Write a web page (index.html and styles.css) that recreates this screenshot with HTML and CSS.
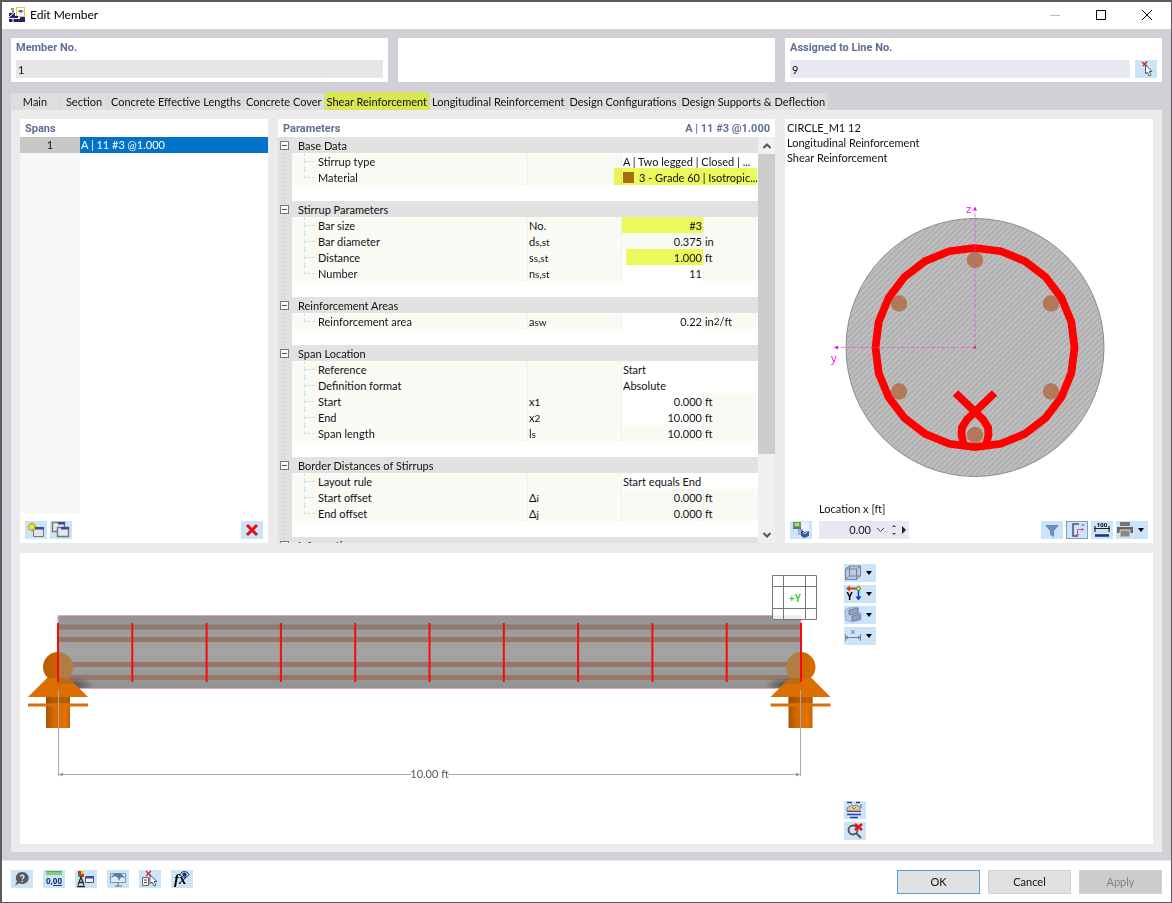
FILE: index.html
```html
<!DOCTYPE html>
<html lang="en">
<head>
<meta charset="utf-8">
<title>Edit Member</title>
<link rel="stylesheet" href="styles.css">
</head>
<body>
<div class="window">
  <header class="titlebar">
    <svg class="app-icon" viewBox="0 0 16 16" aria-hidden="true">
      <rect x="7.500" y=".5" width="8" height="9" fill="#fff" stroke="#f0c040"/><path d="M9 5c1-3 4-3 6 0l-2-.5-1 2.500-1-2z" fill="#3d6fa8"/>
      <path d="M2 1h3v2H2zM3 3h2v3H3z" fill="#b09a4a"/><path d="M0 6h6v5H0zM0 12h16v3H0z" fill="#20236b"/><path d="M6 9h3v2H6zM11 10h5v2h-5z" fill="#20236b"/><path d="M0 10l5-4M4 12v3" stroke="#fff"/>
    </svg>
    <h1 class="title">Edit Member</h1>
    <div class="window-controls">
      <button class="win-btn" aria-label="Minimize"><svg viewBox="0 0 12 12"><path d="M1 6.500h10" stroke="#bbb"/></svg></button>
      <button class="win-btn" aria-label="Maximize"><svg viewBox="0 0 12 12"><path d="M1.500 1.500h9v9h-9z" fill="none" stroke="#000"/></svg></button>
      <button class="win-btn" aria-label="Close"><svg viewBox="0 0 12 12"><path d="M1 1l10 10M11 1L1 11" stroke="#000"/></svg></button>
    </div>
  </header>

  <main class="content">
    <div class="header-cards">
      <section class="card">
        <label class="heading" for="member">Member No.</label>
        <input class="field readonly" id="member" value="1" readonly>
      </section>
      <section class="card"></section>
      <section class="card">
        <label class="heading" for="line">Assigned to Line No.</label>
        <div class="field-row">
          <input class="field" id="line" value="9">
          <button class="tool" aria-label="Select line"><svg viewBox="0 0 22 18"><path d="M7 2l5 4M12 1.500L8 6" stroke="#e02020" stroke-width="1.500"/><path d="M10.500 5v9l2-2 1.500 4 2-1-1.700-3.500H17z" fill="#fff" stroke="#556"/></svg></button>
        </div>
      </section>
    </div>

    <nav class="tabs">
      <button class="tab short">Main</button><button class="tab short">Section</button><button class="tab">Concrete Effective Lengths</button><button class="tab">Concrete Cover</button><button class="tab active">Shear Reinforcement</button><button class="tab">Longitudinal Reinforcement</button><button class="tab">Design Configurations</button><button class="tab">Design Supports &amp; Deflection</button>
    </nav>

    <div class="tab-page">
      <div class="upper">
        <section class="panel spans">
          <h2 class="heading">Spans</h2>
          <div class="span-list">
            <table class="span-table"><tbody><tr><th scope="row">1</th><td>A | 11 #3 @1.000</td></tr></tbody></table>
            <div class="span-rest"></div>
          </div>
          <div class="span-tools">
            <button class="tool" aria-label="New span"><svg viewBox="0 0 22 18"><path d="M8.500 6.500h10v9h-10z" fill="#e4e4e4" stroke="#777"/><path d="M9 6h10v2.500H9z" fill="#3948a8"/><path d="M7 1l.8 3L10 2.500 9.200 5 12 5.500 9.500 6.500l1 2.500-2.700-1L7 10.500 6 8 3.500 9l1-2.500L2 5.500 4.800 5 4 2.500 6.200 4z" fill="#f2ec20" stroke="#8b9a28" stroke-width=".6"/></svg></button>
            <button class="tool" aria-label="Copy span"><svg viewBox="0 0 22 18"><path d="M2.500 1.500h12v9h-12z" fill="#e8e8e8" stroke="#777" stroke-width="1.400"/><path d="M8 1h7v2.500H8z" fill="#3948a8"/><path d="M7.500 6.500h11v9h-11z" fill="#e8e8e8" stroke="#777" stroke-width="1.400"/><path d="M11 6h8v2.500h-8z" fill="#3948a8"/></svg></button>
            <button class="tool push" aria-label="Delete span"><svg viewBox="0 0 22 18"><path d="M6 4l10 10M16 4L6 14" stroke="#ee0d0d" stroke-width="3"/></svg></button>
          </div>
        </section>

        <section class="panel params">
          <div class="params-head"><h2 class="heading">Parameters</h2><span class="heading">A | 11 #3 @1.000</span></div>
          <div class="params-body">
            <div class="grid-scroll">
            <table class="grid">
              <colgroup><col class="c-gutter"><col class="c-label"><col class="c-symbol"><col class="c-value"><col class="c-unit"></colgroup>
              <tbody>
              <tr class="group"><td><button class="toggle" aria-label="Collapse Base Data"></button></td><th colspan="4">Base Data</th></tr>
              <tr><td></td><th>Stirrup type</th><td></td><td colspan="2" class="edit">A | Two legged | Closed | ...</td></tr>
              <tr class="last"><td></td><th>Material</th><td></td><td colspan="2" class="edit wide"><span class="swatch"></span>3 - Grade 60 | Isotropic...</td></tr>
              <tr class="gap"><td></td><td colspan="4"></td></tr>
              <tr class="group"><td><button class="toggle" aria-label="Collapse Stirrup Parameters"></button></td><th colspan="4">Stirrup Parameters</th></tr>
              <tr><td></td><th>Bar size</th><td>No.</td><td class="num mark">#3</td><td></td></tr>
              <tr><td></td><th>Bar diameter</th><td>d<small>s,st</small></td><td class="num">0.375</td><td>in</td></tr>
              <tr><td></td><th>Distance</th><td>s<small>s,st</small></td><td class="num edit narrow">1.000</td><td>ft</td></tr>
              <tr class="last"><td></td><th>Number</th><td>n<small>s,st</small></td><td class="num edit">11</td><td></td></tr>
              <tr class="gap"><td></td><td colspan="4"></td></tr>
              <tr class="group"><td><button class="toggle" aria-label="Collapse Reinforcement Areas"></button></td><th colspan="4">Reinforcement Areas</th></tr>
              <tr class="last"><td></td><th>Reinforcement area</th><td>a<small>sw</small></td><td class="num edit">0.22</td><td>in<small class="up">2</small>/ft</td></tr>
              <tr class="gap"><td></td><td colspan="4"></td></tr>
              <tr class="group"><td><button class="toggle" aria-label="Collapse Span Location"></button></td><th colspan="4">Span Location</th></tr>
              <tr><td></td><th>Reference</th><td></td><td colspan="2" class="edit">Start</td></tr>
              <tr><td></td><th>Definition format</th><td></td><td colspan="2" class="edit">Absolute</td></tr>
              <tr><td></td><th>Start</th><td>x<small>1</small></td><td class="num edit">0.000</td><td>ft</td></tr>
              <tr><td></td><th>End</th><td>x<small>2</small></td><td class="num edit">10.000</td><td>ft</td></tr>
              <tr class="last"><td></td><th>Span length</th><td>l<small>s</small></td><td class="num">10.000</td><td>ft</td></tr>
              <tr class="gap"><td></td><td colspan="4"></td></tr>
              <tr class="group"><td><button class="toggle" aria-label="Collapse Border Distances of Stirrups"></button></td><th colspan="4">Border Distances of Stirrups</th></tr>
              <tr><td></td><th>Layout rule</th><td></td><td colspan="2" class="edit">Start equals End</td></tr>
              <tr><td></td><th>Start offset</th><td>Δ<small>i</small></td><td class="num">0.000</td><td>ft</td></tr>
              <tr class="last"><td></td><th>End offset</th><td>Δ<small>j</small></td><td class="num">0.000</td><td>ft</td></tr>
              <tr class="gap"><td></td><td colspan="4"></td></tr>
              <tr class="group"><td><button class="toggle" aria-label="Collapse Information"></button></td><th colspan="4">Information</th></tr>
              </tbody>
            </table>
            </div>
            <div class="scrollbar">
              <button class="scroll-btn" aria-label="Scroll up"><svg viewBox="0 0 10 8"><path d="M1.500 6L5 2.500 8.500 6" fill="none" stroke="#555" stroke-width="2"/></svg></button>
              <div class="thumb"></div><div class="track"></div>
              <button class="scroll-btn" aria-label="Scroll down"><svg viewBox="0 0 10 8"><path d="M1.500 2L5 5.500 8.500 2" fill="none" stroke="#555" stroke-width="2"/></svg></button>
            </div>
          </div>
        </section>

        <section class="panel section-view">
          <p class="section-text">CIRCLE_M1 12<br>Longitudinal Reinforcement<br>Shear Reinforcement</p>
          <svg class="section-svg" viewBox="-190 -181 368 332" role="img" aria-label="Circular cross-section">
            <defs><pattern id="hatch" width="4" height="4" patternUnits="userSpaceOnUse" patternTransform="rotate(45)"><rect width="4" height="4" fill="#b0b0b0"/><path d="M1 0v4" stroke="#cfcfcf" stroke-width="1"/></pattern></defs>
            <circle r="129" fill="url(#hatch)" stroke="#8c8c8c"/>
            <g fill="#b37859"><circle cy="-87.500" r="8.200"/><circle cx="-76" cy="-44" r="8.200"/><circle cx="76" cy="-44" r="8.200"/><circle cx="-76" cy="44" r="8.200"/><circle cx="76" cy="44" r="8.200"/><circle cy="87.500" r="8.200"/></g>
            <g fill="none" stroke="#f00" stroke-width="7.800">
              <path d="M0-99.500L25.800-96.300 49.900-86.300 70.500-70.500 86.300-49.900 96.300-25.800 99.500 0 96.300 25.800 86.300 49.900 70.500 70.500 49.900 86.300 25.800 96.300 0 99.500-25.800 96.300-49.900 86.300-70.500 70.500-86.300 49.900-96.300 25.800-99.500 0-96.300-25.800-86.300-49.900-70.500-70.500-49.900-86.300-25.800-96.300z"/>
              <path d="M-19.500 45.500L8 72l5 8 .5 7-2 9M19.500 45.500L-8 72l-5 8-.5 7 2 9"/>
            </g>
            <path d="M0 0V-137M0 0H-137" stroke="#e040e0" stroke-dasharray="4 2 2 2" stroke-width=".7"/>
            <path d="M-2-137L0-141 2-137zM-137-2L-141 0-137 2z" fill="#f0f"/><circle r="1.200" fill="#e02050"/>
            <text class="axis" x="-9" y="-135">z</text><text class="axis" x="-144" y="14">y</text>
          </svg>
          <div class="location">
            <label class="location-label" for="loc">Location x [ft]</label>
            <div class="location-row">
              <button class="tool" aria-label="Render"><svg viewBox="0 0 22 18"><path d="M9 1h10v15H9z" fill="#fff" opacity=".6"/><path d="M3 1h8v7H3z" fill="#5ea552"/><path d="M5 2h4v3H5z" fill="#e2cf54"/><path d="M3 6h8v2H3z" fill="#4d7aa8"/><path d="M8 8h5v6H8z" fill="#8698ad" opacity=".7"/><path d="M11 9l4 2 4-1v5l-5 2-3-2z" fill="#355f96"/><path d="M13 11l2 2 2-2" fill="none" stroke="#cde"/></svg></button>
              <div class="spin">
                <input id="loc" class="spin-input" value="0.00">
                <svg class="spin-marks" viewBox="0 0 34 18" aria-hidden="true"><path d="M2 7l3.500 3.500L9 7" fill="none" stroke="#444"/><path d="M17 6L19 4l2 2zM17 12l2 2 2-2z" fill="#444"/><path d="M27 5l4 4-4 4z" fill="#222"/></svg>
              </div>
              <button class="tool push" aria-label="Filter"><svg viewBox="0 0 22 18"><path d="M4 4h14l-5 6v6l-4-2v-4z" fill="#6d8fc0"/></svg></button>
              <button class="tool pressed" aria-label="Axes"><svg viewBox="0 0 22 18"><path d="M13 3H7v12h5" fill="none" stroke="#4b4f66" stroke-width="1.500"/><path d="M11.500 15V8.500h6M10 13l1.500 2 1.500-2M15.500 7l2 1.500-2 1.500M16 3l1 2 1-2" fill="none" stroke="#e0508e"/></svg></button>
              <button class="tool" aria-label="Dimensions"><svg viewBox="0 0 22 18"><text x="11" y="6" class="icon-100">100</text><path d="M3 7.500h16M4 5v6M18 5v6" stroke="#222" stroke-width="1.200"/><path d="M4 14.500h14" stroke="#1d2f7d" stroke-width="2.500"/></svg></button>
              <button class="tool wide" aria-label="Print"><svg viewBox="0 0 32 18"><path d="M4 1h10v4H4z" fill="#777"/><path d="M1 6h16v6H1z" fill="#666"/><path d="M4 9h10v7H4z" fill="#888" stroke="#ddd"/><path d="M22 7h6l-3 4z" fill="#000"/></svg></button>
            </div>
          </div>
        </section>
      </div>

      <section class="panel model">
        <svg class="beam" viewBox="20 553 824 291" role="img" aria-label="Member on two supports">
          <defs>
            <linearGradient id="conc" x1="0" y1="0" x2="0" y2="1"><stop offset="0" stop-color="#949494"/><stop offset=".5" stop-color="#a4a4a4"/><stop offset="1" stop-color="#929292"/></linearGradient>
            <linearGradient id="pier"><stop offset="0" stop-color="#a85400"/><stop offset=".35" stop-color="#d56900"/><stop offset=".8" stop-color="#e57200"/><stop offset="1" stop-color="#c66200"/></linearGradient>
            <linearGradient id="ball"><stop offset="0" stop-color="#b95d00"/><stop offset="1" stop-color="#d96c00"/></linearGradient>
            <radialGradient id="shade"><stop offset="0" stop-color="#333" stop-opacity=".8"/><stop offset="1" stop-color="#333" stop-opacity="0"/></radialGradient>
            <clipPath id="inside"><path d="M58 615h743v73H58z"/></clipPath>
            <g id="base"><path d="M-12 30h24v31h-24z" fill="url(#pier)"/><path d="M-12 30h24v6h-24z" fill="#8a4600" opacity=".45"/><path d="M-11 11l-19 19h60l-19-19z" fill="#dc6f00"/><path d="M-30 38h60" stroke="#dd7000" stroke-width="3"/></g>
          </defs>
          <circle cx="58" cy="667" r="15" fill="url(#ball)"/><circle cx="800.500" cy="667" r="15" fill="url(#ball)"/>
          <path d="M58 615.500h743v73H58z" fill="url(#conc)" stroke="#e5a9a9"/>
          <g fill="none"><path d="M58 627h743" stroke="#8b7b70" stroke-width="5"/><path d="M58 639.500h743M58 664.500h743M58 677.500h743" stroke="#98776a" stroke-width="5"/></g>
          <path d="M58 652a15 15 0 0 1 0 30zM801 652a15 15 0 0 0 0 30z" fill="#b27d43"/>
          <g clip-path="url(#inside)" fill="url(#shade)"><ellipse cx="72" cy="685" rx="22" ry="8"/><ellipse cx="787" cy="685" rx="22" ry="8"/></g>
          <use href="#base" x="58" y="667"/><use href="#base" x="800.500" y="667"/>
          <path d="M58 678h11l6 6H58zM801 678h-11l-6 6h17z" fill="#a46529" opacity=".6"/>
          <path d="M58 623v59M132.300 623v59M206.600 623v59M280.900 623v59M355.200 623v59M429.500 623v59M503.800 623v59M578.100 623v59M652.400 623v59M726.700 623v59M801 623v59" stroke="#f80a0a" stroke-width="2"/>
          <path d="M58.500 690v86M800.500 690v86M59 774.500h352M448 774.500h352" stroke="#aaa" fill="none"/>
          <path d="M59 774.500l4-2v4zM800 774.500l-4-2v4z" fill="#999"/>
          <text class="dim" x="429.500" y="778">10.00 ft</text>
          <path d="M772 575h45v45h-45z" fill="#fff" fill-opacity=".82"/>
          <path d="M772.500 575.500h44v44h-44zM783.500 575v45M805.500 575v45M772 586.500h45M772 608.500h45" fill="none" stroke="#777"/>
          <text class="plus-y" x="795" y="602">+Y</text>
        </svg>
        <div class="model-tools">
          <button class="tool wide" aria-label="View box"><svg viewBox="0 0 32 18"><path d="M1.500 5l4-3h11v10l-4 3.500h-11z" fill="#b9c9e2" stroke="#71829c"/><path d="M1.500 5h11v10.500M12.500 5l4-3M5.500 2v10h11M5.500 12l-4 3" fill="none" stroke="#71829c"/><path d="M22 7h6l-3 4z" fill="#000"/></svg></button>
          <button class="tool wide" aria-label="View direction"><svg viewBox="0 0 32 18"><path d="M6 3.500h7" stroke="#d43b12" stroke-width="2"/><path d="M2 3.500l4-3v6z" fill="#d43b12"/><path d="M14.500 5v8" stroke="#1337c8" stroke-width="1.500"/><path d="M11.500 11.500h6l-3 4z" fill="#1337c8"/><circle cx="14.500" cy="3.500" r="2" fill="#dde33b" stroke="#2d9346"/><text x="5.500" y="15" class="icon-y">Y</text><path d="M22 7h6l-3 4z" fill="#000"/></svg></button>
          <button class="tool wide" aria-label="Display mode"><svg viewBox="0 0 32 18"><path d="M1 4l4-2 9-1v5l3 1v7l-9 2-6-2z" fill="#bccde6" stroke="#8fa3c2" stroke-width=".8"/><path d="M5 4l9-2v5l-9 2zM8 10l8-2v5l-8 2z" fill="#8da2c5" stroke="#5f769b" stroke-width=".8"/><path d="M22 7h6l-3 4z" fill="#000"/></svg></button>
          <button class="tool wide" aria-label="Show dimensions"><svg viewBox="0 0 32 18"><path d="M1.500 7v7M16.500 7v7M2 10.500h14M4 9l-2 1.500L4 12M14 9l2 1.500-2 1.500" fill="none" stroke="#71829c"/><path d="M7 3l4 4M11 3L7 7" stroke="#71829c"/><path d="M22 7h6l-3 4z" fill="#000"/></svg></button>
          <button class="tool drop" aria-label="Layers"><svg viewBox="0 0 22 18"><path d="M3 1.500h5M12 1.500h4M3 13.500h14M6 16.500h8" stroke="#2a3ea8" stroke-width="1.600"/><path d="M3 7l5-3 2 1 2-1 4 2v4H3z" fill="#dfc5a4" stroke="#8a7a6c"/><path d="M8 6l2 2 2-2" fill="none" stroke="#8a7a6c"/><path d="M3 10.500h14" stroke="#555"/><path d="M16 3h2v4h-2z" fill="#78a8e0"/></svg></button>
          <button class="tool" aria-label="Reset zoom"><svg viewBox="0 0 22 18"><circle cx="9" cy="8" r="4.500" fill="none" stroke="#555" stroke-width="1.800"/><path d="M12 11l5 5" stroke="#555" stroke-width="2"/><path d="M11 2l7 6M18 2l-7 6" stroke="#e81111" stroke-width="2.400"/></svg></button>
        </div>
      </section>
    </div>
  </main>

  <footer class="footer">
    <div class="footer-tools">
      <button class="tool" aria-label="Help"><svg viewBox="0 0 22 18"><path d="M11 2a6.500 6 0 1 1-3 11.200L4 15.500l2-4A6 6 0 0 1 11 2z" fill="#5a5a5a"/><path d="M9.300 6.500c.5-2 4-1.500 3.500.5-.3 1-1.500 1.200-1.600 2.500M11.200 10.800v1.400" fill="none" stroke="#d7e8f5" stroke-width="1.400"/></svg></button>
      <button class="tool" aria-label="Units"><svg viewBox="0 0 22 18"><path d="M3 1h16v4H3z" fill="#7ed07a"/><path d="M3 1.500h16" stroke="#4caa50"/><text x="11" y="14" class="icon-zero">0,00</text><path d="M10 15.500h9" stroke="#23379a"/></svg></button>
      <button class="tool" aria-label="Display properties"><svg viewBox="0 0 22 18"><path d="M3 1h3v3H3z" fill="#e22"/><path d="M6 1h3v3H6z" fill="#dbd420"/><path d="M3 4h3v3H3z" fill="#2a9f36"/><path d="M6 4h3v3H6z" fill="#e22"/><path d="M3 15l3-8 3 8M4 12.500h4M2 16.500h8" fill="none" stroke="#222" stroke-width="1.300"/><path d="M10.500 6.500h8v6h-8z" fill="#f5f5f5" stroke="#555"/><path d="M11 6h8v2.500h-8z" fill="#3948a8"/></svg></button>
      <button class="tool" aria-label="Show model"><svg viewBox="0 0 22 18"><path d="M3.500 3.500h15v9h-15z" fill="#dceaf5" stroke="#8294a5"/><path d="M8 16h7M11 13v3" stroke="#8294a5" stroke-width="1.500"/><path d="M4 8c2-6 10-7 14 0l-4-1-2 4-1-3-3-2z" fill="#507eaa"/></svg></button>
      <button class="tool" aria-label="Select object"><svg viewBox="0 0 22 18"><path d="M3.500 7.500h6v8h-6z" fill="#f5f5f5" stroke="#666"/><path d="M5 10h3M5 12.500h3" stroke="#555"/><path d="M7 1l5 5M12 1L7 6" stroke="#e02020" stroke-width="1.300"/><path d="M11 5v9l2-2 2 4 2-1-2-3.500h3z" fill="#fff" stroke="#556"/></svg></button>
      <button class="tool" aria-label="Formula"><svg viewBox="0 0 22 18"><text x="3" y="14" class="icon-f">fx</text><path d="M9 4.500c2-4 7-4 9 0-2 3.500-7 3.500-9 0z" fill="#c9d4ee" stroke="#1e2a78"/><circle cx="13.500" cy="4.500" r="2" fill="#1e2a78"/></svg></button>
    </div>
    <div class="actions">
      <button class="action primary">OK</button><button class="action">Cancel</button><button class="action" disabled>Apply</button>
    </div>
  </footer>
</div>
</body>
</html>
```
FILE: styles.css
```css
* { box-sizing: border-box; }
body {
  margin: 0; height: 100vh; padding: 2px 1px 1px 2px; background: #5c5a5a;
  font: 11px/16px Lato, "Open Sans", sans-serif; color: #111;
}
button, input { font: inherit; color: inherit; border: 0; border-radius: 0; padding: 0; margin: 0; background: none; }
h1, h2, p { margin: 0; font: inherit; }
svg { display: block; }

.window { display: flex; flex-direction: column; height: 100%; background: #fff; }
.titlebar { display: flex; align-items: center; height: 27px; padding: 0 1px 1px 7px; flex: none; }
.app-icon { width: 16px; height: 16px; }
.title { flex: 1; margin-left: 5px; font-size: 12px; color: #000; }
.window-controls { display: flex; }
.win-btn { width: 46px; height: 26px; display: grid; place-items: center; }
.win-btn svg { width: 12px; height: 12px; }

.content { flex: 1; min-height: 0; display: flex; flex-direction: column; padding: 9px 9px 8px; background: #d1d0d6; border-bottom: 1px solid #e8e8ec; }
.header-cards { display: grid; grid-template-columns: repeat(3, 1fr); gap: 10px; flex: none; }
.card { display: flex; flex-direction: column; gap: 4px; min-height: 44px; padding: 0 5px; background: #fff; }
.heading { padding-top: 1px; font: 700 11px/17px Roboto, sans-serif; color: #5f6f96; }
.field { width: 100%; height: 18px; padding: 1px 2px 0; background: #e8e8f3; }
.field.readonly { background: #e6e6e6; }
.field-row { display: flex; gap: 5px; }
.field-row .field { flex: 1; min-width: 0; }

.tool { flex: none; width: 22px; height: 18px; background: #cce4f7; }
.tool svg { width: 100%; height: 100%; }
.tool.wide { width: 32px; }
.tool.push { margin-left: auto; }
.tool.pressed { outline: 1px solid #7ba0c4; outline-offset: -1px; }

.tabs { display: flex; align-items: flex-end; flex: none; height: 18px; margin-top: 10px; }
.tab { height: 17px; padding: 1px 2px 0; background: #dedede; border-right: 1px solid #d6d6d9; white-space: nowrap; line-height: 16px; }
.tab.short { min-width: 49px; }
.tab.active { height: 18px; background: #d9e653; }

.tab-page { flex: 1; min-height: 0; display: grid; grid-template-rows: 424fr 291fr; gap: 10px; padding: 9px 9px 8px; background: #ebebeb; }
.upper { display: grid; grid-template-columns: 248fr 497fr 368fr; gap: 10px; min-height: 0; }
.panel { background: #fff; min-width: 0; min-height: 0; }

.spans { display: flex; flex-direction: column; }
.spans .heading { padding-left: 5px; }
.span-list { flex: 1; display: flex; flex-direction: column; }
.span-table { width: 100%; border-collapse: collapse; table-layout: fixed; line-height: 16px; }
.span-table th { width: 60px; padding: 0; background: #c8c8c8; font-weight: 400; }
.span-table td { padding: 0 1px; background: #0173cb; color: #fff; }
.span-rest { flex: 1; width: 60px; background: #f7f7f7; }
.span-tools { display: flex; gap: 3px; padding: 8px 5px 4px; }

.params { display: flex; flex-direction: column; }
.params-head { display: flex; justify-content: space-between; padding: 0 5px; flex: none; }
.params-body { flex: 1; min-height: 0; display: flex; }
.grid-scroll { flex: 1; overflow: hidden; }
.grid { width: 100%; border-collapse: separate; border-spacing: 0; table-layout: fixed; line-height: 15px; white-space: nowrap; }
.c-gutter { width: 14px; }
.c-symbol { width: 94px; }
.c-value { width: 82px; }
.c-unit { width: 55px; }
.grid td, .grid th { height: 16px; padding: 1px 1px 0; font-weight: 400; text-align: left; background: #fafaf5; position: relative; }
.grid tr > td:first-child { padding: 0; background: repeating-linear-gradient(#ccc 0 2px, transparent 2px 4px) 6px 0 / 1px 100% no-repeat #e1e1e1; }
.grid th { padding-left: 26px; }
.grid tr:not(.group) th::before { content: ""; position: absolute; left: 12px; top: 0; width: 10px; height: 8px; border: dashed #ddd; border-width: 0 0 1px 1px; }
.grid tr:not(.group):not(.last) th::after { content: ""; position: absolute; left: 12px; top: 8px; height: 8px; border-left: 1px dashed #ddd; }
.grid .group th { padding-left: 6px; background: #e2e2e2; }
.grid .gap td:last-child { background: #fff; }
.grid td + td, .grid th + td { border-left: 1px solid #f0f0ec; }
.grid .gap td { border: 0; }
.grid td.edit { background: #fff; }
.grid td.num { text-align: right; }
.grid td.mark { background: #ebf95c; }
.grid td.narrow { background: linear-gradient(#ebf95c, #ebf95c) 4px 0 no-repeat #fff; }
.grid td.wide::before { content: ""; position: absolute; inset: -1px 1px -2px -8px; background: #ebf95c; mix-blend-mode: multiply; }
.grid small { font-size: 10px; line-height: 0; }
.grid small.up { vertical-align: 1px; }
.swatch { display: inline-block; width: 11px; height: 11px; margin-right: 5px; vertical-align: -1px; background: #b8702f; }
.toggle { display: block; width: 9px; height: 9px; margin-left: 2px; border: 1px solid #777; background: linear-gradient(#555, #555) center / 5px 1px no-repeat #fff; }

.scrollbar { display: flex; flex-direction: column; width: 17px; background: #f0f0f0; }
.scroll-btn { height: 17px; display: grid; place-items: center; }
.scroll-btn svg { width: 10px; height: 8px; }
.thumb { flex: 300; background: #cdcdcd; }
.track { flex: 72; }

.section-view { display: flex; flex-direction: column; }
.section-text { padding: 1px 2px 0; line-height: 15px; }
.section-svg { flex: 1; width: 100%; min-height: 0; }
.axis { font: 11px "Open Sans", sans-serif; fill: #f0f; }
.location { padding: 0 5px 4px; }
.location-label { display: block; margin: 0 0 3px 29px; line-height: 18px; }
.location-row { display: flex; gap: 3px; }
.spin { display: flex; width: 90px; margin-left: 4px; background: #e8e8f3; }
.spin-input { flex: 1; min-width: 0; text-align: right; }
.spin-marks { width: 34px; height: 18px; margin-left: 4px; }

.model { display: grid; grid-template-columns: 824fr 309fr; }
.beam { width: 100%; height: 100%; min-height: 0; }
.dim { font: 11px Lato, sans-serif; fill: #555; text-anchor: middle; }
.plus-y { font: 700 10px "Open Sans", sans-serif; fill: #3fce3f; text-anchor: middle; }
.model-tools { display: flex; flex-direction: column; gap: 3px; padding: 11px 0 4px; }
.tool.drop { margin-top: auto; }
.icon-100 { font: 700 6px "Open Sans", sans-serif; text-anchor: middle; }
.icon-y { font: 700 10px "Open Sans", sans-serif; text-anchor: middle; }
.icon-zero { font: 700 8px "Open Sans", sans-serif; text-anchor: middle; fill: #222c60; }
.icon-f { font: italic 700 15px "Liberation Serif", serif; }

.footer { display: flex; justify-content: space-between; flex: none; padding: 9px 9px 8px; }
.footer-tools { display: flex; gap: 10px; }
.actions { display: flex; gap: 8px; }
.action { width: 83px; height: 24px; background: #e1e1e1; border: 1px solid #d2d2d2; }
.action.primary { border: 1px solid #4a9fe0; }
.action:disabled { background: #ccc; color: #838383; }
```
